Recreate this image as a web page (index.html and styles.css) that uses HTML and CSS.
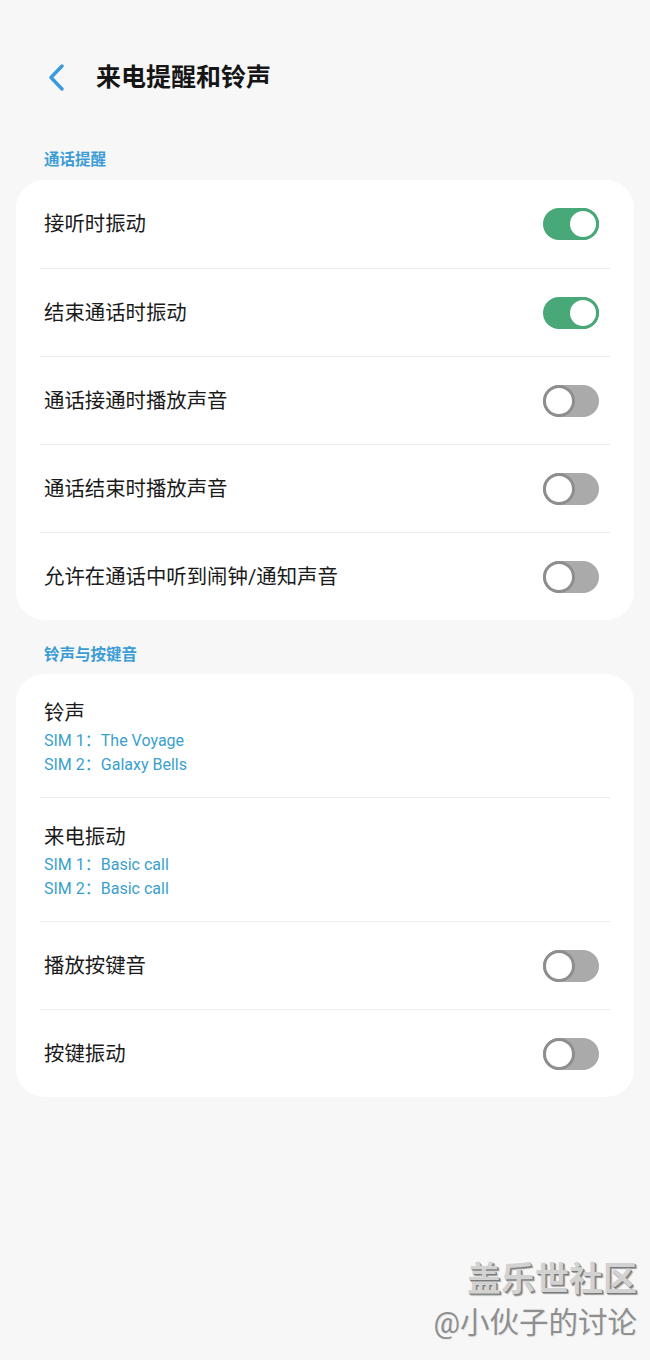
FILE: index.html
```html
<!DOCTYPE html>
<html>
<head>
  <meta charset="utf-8">
  <title>来电提醒和铃声</title>
  <link rel="stylesheet" href="styles.css">
</head>
<body>
  <div class="page">
    <div class="top-bar">
      <svg class="back" width="20" height="30" viewBox="0 0 20 30">
        <polyline points="13,3 2,14.5 13,26" fill="none" stroke="#3a9bdc" stroke-width="3.4" stroke-linecap="round" stroke-linejoin="round"/>
      </svg>
      <h1>来电提醒和铃声</h1>
    </div>

    <div class="section-title">通话提醒</div>
    <div class="card">
      <div class="row">
        <span class="label">接听时振动</span>
        <span class="switch on"></span>
      </div>
      <div class="row">
        <span class="label">结束通话时振动</span>
        <span class="switch on"></span>
      </div>
      <div class="row">
        <span class="label">通话接通时播放声音</span>
        <span class="switch"></span>
      </div>
      <div class="row">
        <span class="label">通话结束时播放声音</span>
        <span class="switch"></span>
      </div>
      <div class="row">
        <span class="label">允许在通话中听到闹钟/通知声音</span>
        <span class="switch"></span>
      </div>
    </div>

    <div class="section-title second">铃声与按键音</div>
    <div class="card">
      <div class="row tall">
        <div>
          <div class="label">铃声</div>
          <div class="sub">SIM 1：The Voyage</div>
          <div class="sub">SIM 2：Galaxy Bells</div>
        </div>
      </div>
      <div class="row tall">
        <div>
          <div class="label">来电振动</div>
          <div class="sub">SIM 1：Basic call</div>
          <div class="sub">SIM 2：Basic call</div>
        </div>
      </div>
      <div class="row">
        <span class="label">播放按键音</span>
        <span class="switch"></span>
      </div>
      <div class="row">
        <span class="label">按键振动</span>
        <span class="switch"></span>
      </div>
    </div>

    <div class="watermark">
      <div class="wm-big">盖乐世社区</div>
      <div class="wm-small">@小伙子的讨论</div>
    </div>
  </div>
</body>
</html>
```

FILE: styles.css
```css
html, body {
  margin: 0;
  background-color: #f7f7f7;
}

body {
  font-family: Roboto, "Noto Sans CJK SC", sans-serif;
  color: #111;
}

.page {
  position: relative;
  height: 1360px;
  overflow: hidden;
}

.top-bar {
  display: flex;
  align-items: center;
  height: 34px;
  padding: 61px 0 0 49px;
}

.back {
  display: block;
  margin-right: 27px;
}

h1 {
  margin: 0;
  font-size: 25px;
  font-weight: bold;
  line-height: 34px;
  color: #161616;
}

.section-title {
  margin: 55px 0 0 44px;
  font-size: 15.5px;
  font-weight: bold;
  line-height: 20px;
  color: #3b9dd6;
}

.section-title.second {
  margin-top: 25px;
}

.card {
  margin: 10px 16px 0;
  background-color: #fff;
  border-radius: 28px;
}

.section-title.second + .card {
  margin-top: 9px;
}

.row {
  display: flex;
  align-items: center;
  justify-content: space-between;
  box-sizing: border-box;
  min-height: 88px;
  margin: 0 24px;
  padding: 0 11px 0 4px;
}

.row + .row {
  border-top: 1px solid #ececec;
}

.row.tall {
  min-height: 123px;
  padding-top: 23px;
  padding-bottom: 20px;
  align-items: flex-start;
}

.label {
  font-size: 20.4px;
  line-height: 32px;
  color: #1a1a1a;
}

.sub {
  font-size: 16px;
  line-height: 24px;
  color: #3a9fcd;
}

.switch {
  position: relative;
  flex: none;
  width: 56px;
  height: 32px;
  border-radius: 16px;
  background-color: #aaaaaa;
}

.switch:after {
  content: "";
  position: absolute;
  top: 0;
  left: 0;
  box-sizing: border-box;
  width: 32px;
  height: 32px;
  border-radius: 50%;
  background-color: #fff;
  border: 3px solid #8e8e8e;
}

.switch.on {
  background-color: #48a878;
}

.switch.on:after {
  left: auto;
  right: 0;
  border-color: #48a878;
}

.watermark {
  position: absolute;
  right: 13px;
  top: 1256px;
  text-align: right;
}

.wm-big {
  font-size: 34px;
  font-weight: bold;
  line-height: 46px;
  color: #d2d2d2;
  text-shadow: 1px 1px 0 #7a7a7a, 2px 2px 1px #9a9a9a;
}

.wm-small {
  margin-top: 1px;
  font-size: 29.5px;
  line-height: 40px;
  color: #8f8f8f;
  text-shadow: 1px 1px 0 #e8e8e8;
}
```
